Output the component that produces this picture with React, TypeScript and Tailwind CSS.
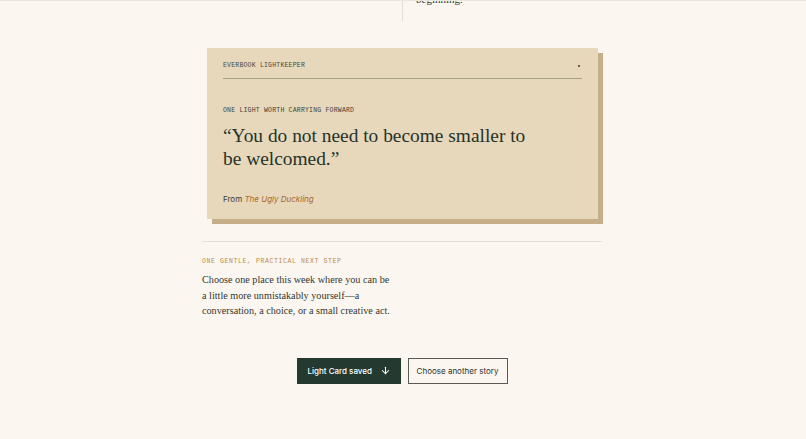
import { ArrowDown } from "lucide-react";

const serif = "font-['Liberation_Serif','Times_New_Roman',serif]";
const mono = "font-['Liberation_Mono','Courier_New',monospace]";
const sans = "font-['Inter','Liberation_Sans',sans-serif]";

export default function App() {
  return (
    <div className="min-h-[439px] w-full overflow-hidden border-t border-[#ece6dc] bg-[#fbf7f0]">
      {/* tail of the previous section */}
      <div className="mx-auto flex h-[20px] w-[402px] pr-[2px]">
        <div className="w-[200px]" />
        <div className="border-l border-[#e3ddd3] pl-[13px]">
          <p className={`${serif} -mt-[9px] text-[11px] leading-[14px] text-[#2f3a32]`}>
            beginning.
          </p>
        </div>
      </div>

      <div className="mx-auto mt-[27px] w-[402px] pr-[2px]">
        {/* light card */}
        <div className="ml-[5px] w-[391px] bg-[#e8d8bb] px-[16px] pb-[15px] pt-[14px] shadow-[5px_5px_0_0_#c6ae88]">
          <div className="flex items-center justify-between border-b border-[#a3a383] pb-[8px]">
            <span className={`${mono} text-[6.5px] leading-[8px] tracking-[0.2px] text-[#4a4a3c]`}>
              EVERBOOK LIGHTKEEPER
            </span>
            <span className="mr-[2px] h-[2px] w-[2px] rounded-full bg-[#2f3a32]" />
          </div>

          <p className={`${mono} mt-[28px] text-[6.5px] leading-[8px] tracking-[0.2px] text-[#3f3f34]`}>
            ONE LIGHT WORTH CARRYING FORWARD
          </p>

          <blockquote className={`${serif} mt-[9px] text-[19.4px] leading-[23px] text-[#25332a]`}>
            “You do not need to become smaller to
            <br />
            be welcomed.”
          </blockquote>

          <p className={`${sans} mt-[24px] text-[8px] leading-[10px] text-[#3a3a30]`}>
            From <em className="text-[#a5672e]">The Ugly Duckling</em>
          </p>
        </div>

        {/* next step */}
        <div className="mt-[22px] border-t border-[#e6dfd4] pt-[16px]">
          <p className={`${mono} text-[6.5px] leading-[8px] tracking-[0.6px] text-[#c0874c]`}>
            ONE GENTLE, PRACTICAL NEXT STEP
          </p>
          <p className={`${serif} mt-[6px] text-[10.2px] leading-[15.5px] text-[#33362f]`}>
            Choose one place this week where you can be
            <br />
            a little more unmistakably yourself—a
            <br />
            conversation, a choice, or a small creative act.
          </p>
        </div>

        {/* actions */}
        <div className="mt-[39px] flex justify-center gap-[7px]">
          <button className={`${sans} flex h-[26px] w-[104px] items-center justify-between bg-[#243a31] pl-[11px] pr-[10px] text-[8px] font-medium text-white`}>
            Light Card saved
            <ArrowDown size={11} strokeWidth={2.25} />
          </button>
          <button className={`${sans} h-[26px] w-[100px] border border-[#5a5a55] text-[8px] text-[#2f2f2a]`}>
            Choose another story
          </button>
        </div>
      </div>
    </div>
  );
}
